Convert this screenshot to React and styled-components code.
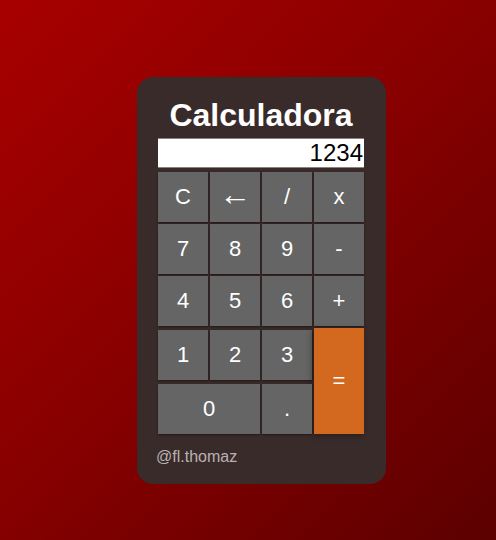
import React from 'react'
import styled, { createGlobalStyle } from 'styled-components'

const GlobalStyle = createGlobalStyle`
    html, body {
        margin: 0;
        padding: 0;
    }

    body {
        min-height: 540px;
        background: linear-gradient(135deg, #a80000 0%, #8a0000 45%, #5c0000 100%);
        font-family: "Liberation Sans", Arial, sans-serif;
    }
`

const keys = [
    { label: 'C' },
    { label: '←', big: true },
    { label: '/' },
    { label: 'x' },
    { label: '7' },
    { label: '8' },
    { label: '9' },
    { label: '-' },
    { label: '4' },
    { label: '5' },
    { label: '6' },
    { label: '+' },
    { label: '1' },
    { label: '2' },
    { label: '3' },
    { label: '=', equal: true },
    { label: '0', wide: true },
    { label: '.' },
]

function App() {
    return (
        <Page>
            <GlobalStyle />
            <Card>
                <Title>Calculadora</Title>
                <Display>1234</Display>
                <Keypad>
                    {keys.map((k) => (
                        <Key key={k.label} $equal={k.equal} $wide={k.wide} $big={k.big}>
                            {k.label}
                        </Key>
                    ))}
                </Keypad>
                <Footer>@fl.thomaz</Footer>
            </Card>
        </Page>
    )
}

export default App

const Page = styled.div`
    display: flex;
    align-items: flex-start;
    padding: 77px 0 0 137px;
    min-height: 540px;
    box-sizing: border-box;
`

const Card = styled.div`
    width: 249px;
    height: 407px;
    box-sizing: border-box;
    padding: 20px 22px 0 21px;
    background-color: #3a2b2b;
    border-radius: 16px;
    display: flex;
    flex-direction: column;
`

const Title = styled.h1`
    margin: 0;
    font-size: 32px;
    line-height: 37px;
    font-weight: bold;
    color: #ffffff;
    text-align: center;
`

const Display = styled.div`
    margin-top: 4px;
    height: 30px;
    box-sizing: border-box;
    background-color: #ffffff;
    border-top: 1px solid #8a8080;
    border-bottom: 1px solid #8a8080;
    color: #000000;
    font-size: 24px;
    line-height: 28px;
    text-align: right;
    padding-right: 1px;
`

const Keypad = styled.div`
    margin-top: 4px;
    display: grid;
    grid-template-columns: repeat(4, 50px);
    grid-template-rows: 50px 50px 50px 52px 52px;
    gap: 2px;
`

const Key = styled.button`
    border: none;
    margin: 0;
    padding: 0 0 ${(p) => (p.$big ? '7px' : '0')};
    height: 50px;
    background-color: ${(p) => (p.$equal ? '#d2691e' : '#656565')};
    color: #ffffff;
    font-family: "Liberation Sans", Arial, sans-serif;
    font-size: ${(p) => (p.$big ? '32px' : '22px')};
    line-height: 1;
    box-shadow: 0 1px 2px rgba(0, 0, 0, 0.45);
    cursor: pointer;
    grid-column: ${(p) => (p.$wide ? 'span 2' : 'auto')};
    grid-row: ${(p) => (p.$equal ? 'span 2' : 'auto')};
    align-self: ${(p) => (p.$equal ? 'stretch' : 'end')};

    ${(p) => p.$equal && `
        height: auto;
        box-shadow: -2px 2px 6px rgba(0, 0, 0, 0.35);
    `}
`

const Footer = styled.div`
    margin-top: 14px;
    margin-left: -2px;
    color: #b9b2b2;
    font-size: 16px;
    line-height: 18px;
`
